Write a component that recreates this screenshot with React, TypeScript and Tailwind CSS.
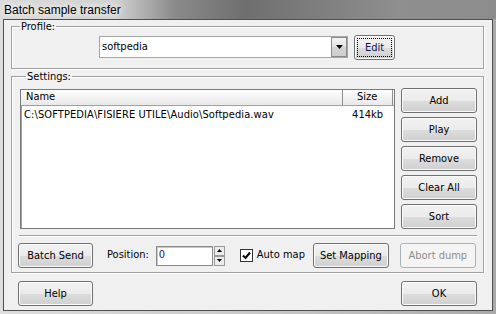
import React from "react";

const font = "font-['DejaVu_Sans_Condensed','DejaVu_Sans',sans-serif]";

function Btn({
  children,
  className = "",
  disabled = false,
  focus = false,
}: {
  children: React.ReactNode;
  className?: string;
  disabled?: boolean;
  focus?: boolean;
}) {
  const base = disabled
    ? "border-[#adb2b5] bg-[#f4f4f4] text-[#8d8d8d]"
    : "border-[#707070] bg-[linear-gradient(#f2f2f2_0%,#ebebeb_50%,#dddddd_51%,#cfcfcf_100%)] text-black shadow-[inset_0_0_0_1px_#fbfbfb]";
  return (
    <div
      className={`flex h-[25px] shrink-0 items-center justify-center whitespace-nowrap rounded-[3px] border text-[11px] leading-none ${base} ${
        focus ? "outline-1 outline-dotted outline-black -outline-offset-4" : ""
      } ${className}`}
    >
      {children}
    </div>
  );
}

export default function App() {
  return (
    <div
      className={`flex h-[314px] w-[496px] flex-col overflow-hidden bg-[linear-gradient(to_right,#dedede,#c4c4c4_60%,#a9a9a9)] ${font}`}
    >
      {/* Title bar */}
      <div className="flex h-[19px] shrink-0 items-center bg-[linear-gradient(to_right,#dadada_0px,#d2d2d2_115px,#8a8a8a_175px,#6f6f6f_245px,#8f8f8f_400px,#8c8c8c_100%)] pl-[4px]">
        <span className="font-['Liberation_Sans',Arial,sans-serif] text-[12px] leading-none text-black [text-shadow:0_0_6px_#fff,0_0_10px_#fff]">
          Batch sample transfer
        </span>
      </div>

      {/* Client area */}
      <div className="mx-[3px] flex h-[292px] flex-col border border-[#4f4f4f] bg-[#f0f0f0] text-[11px] text-black">
        {/* Profile group */}
        <fieldset className="ml-[7px] mr-[8px] h-[49px] border border-[#a0a0a0] shadow-[inset_1px_1px_0_#fff,1px_1px_0_#fff]">
          <legend className="ml-[8px] px-[1px] text-[11px] leading-[13px]">Profile:</legend>
          <div className="mt-[2px] flex items-start">
            <div className="ml-[87px] mt-[1px] flex h-[22px] w-[249px] items-center border border-[#a5a5a5] bg-white pl-[2px]">
              <span className="flex-1">softpedia</span>
              <div className="flex h-[20px] w-[16px] items-center justify-center border border-[#8a8a8a] bg-[linear-gradient(#f4f4f4,#e2e2e2_50%,#d4d4d4_51%,#cfcfcf)]">
                <svg width="7" height="4" viewBox="0 0 7 4">
                  <path d="M0 0h7L3.5 4z" fill="#000" />
                </svg>
              </div>
            </div>
            <Btn focus className="ml-[6px] w-[41px]">
              <span className="text-[#101050]">Edit</span>
            </Btn>
          </div>
        </fieldset>

        {/* Settings group */}
        <fieldset className="ml-[7px] mr-[8px] mt-[1px] h-[203px] border border-[#a0a0a0] px-[6px] shadow-[inset_1px_1px_0_#fff,1px_1px_0_#fff]">
          <legend className="ml-[8px] px-[1px] text-[11px] leading-[13px]">Settings:</legend>
          <div className="mt-[5px] flex">
            {/* list view */}
            <div className="ml-[2px] mt-[1px] flex h-[140px] w-[375px] flex-col border border-[#7a7a7a] bg-white shadow-[inset_1px_1px_0_#a0a0a0]">
              <div className="flex h-[16px] items-stretch border-b border-[#a0a0a0] bg-[linear-gradient(#ffffff,#f3f3f3_50%,#e9e9e9)]">
                <div className="flex w-[322px] items-center border-r border-[#8f8f8f] pl-[5px]">Name</div>
                <div className="flex w-[50px] items-center border-r border-[#8f8f8f] pl-[14px]">Size</div>
              </div>
              <div className="flex h-[19px] items-center whitespace-nowrap">
                <div className="w-[322px] pl-[3px] tracking-[0.1px]">C:\SOFTPEDIA\FISIERE UTILE\Audio\Softpedia.wav</div>
                <div className="w-[40px] text-right">414kb</div>
              </div>
            </div>
            {/* buttons */}
            <div className="ml-[6px] flex flex-col gap-[4px]">
              <Btn className="w-[76px]">Add</Btn>
              <Btn className="w-[76px]">Play</Btn>
              <Btn className="w-[76px]">Remove</Btn>
              <Btn className="w-[76px]">Clear All</Btn>
              <Btn className="w-[76px]">Sort</Btn>
            </div>
          </div>
          {/* separator */}
          <div className="ml-[1px] mt-[6px] h-[2px] w-[458px] border-t border-[#a0a0a0] border-b border-b-white" />
          {/* bottom row */}
          <div className="mt-[6px] flex items-center whitespace-nowrap">
            <Btn className="w-[75px]">Batch Send</Btn>
            <span className="ml-[14px] shrink-0">Position:</span>
            <div className="ml-[7px] flex shrink-0 items-center">
              <div className="flex h-[20px] w-[57px] items-center border border-[#8a8a8a] bg-white pl-[2px] shadow-[inset_1px_1px_0_#c8c8c8]">
                <span className="text-[#1a1a6e]">0</span>
              </div>
              <div className="ml-[1px] flex flex-col">
                <div className="flex h-[10px] w-[11px] items-center justify-center border border-[#9a9a9a] bg-[#ececec]">
                  <svg width="5" height="3" viewBox="0 0 5 3">
                    <path d="M0 3h5L2.5 0z" fill="#000" />
                  </svg>
                </div>
                <div className="flex h-[10px] w-[11px] items-center justify-center border border-[#9a9a9a] bg-[#ececec]">
                  <svg width="5" height="3" viewBox="0 0 5 3">
                    <path d="M0 0h5L2.5 3z" fill="#000" />
                  </svg>
                </div>
              </div>
            </div>
            <div className="ml-[15px] flex h-[13px] w-[13px] shrink-0 items-center justify-center border border-[#333] bg-white">
              <svg width="9" height="9" viewBox="0 0 9 9">
                <path d="M1 4.5l2.5 2.5L8 1.5" stroke="#000" strokeWidth="2" fill="none" />
              </svg>
            </div>
            <span className="ml-[4px] w-[45px] shrink-0">Auto map</span>
            <Btn className="ml-[11px] w-[76px] border-[#6a6a6a]">Set Mapping</Btn>
            <Btn disabled className="ml-[11px] w-[76px]">Abort dump</Btn>
          </div>
        </fieldset>

        {/* Help / OK */}
        <div className="ml-[14px] mr-[15px] mt-[8px] flex justify-between">
          <Btn className="w-[75px]">Help</Btn>
          <Btn className="w-[76px]">OK</Btn>
        </div>
      </div>
    </div>
  );
}
